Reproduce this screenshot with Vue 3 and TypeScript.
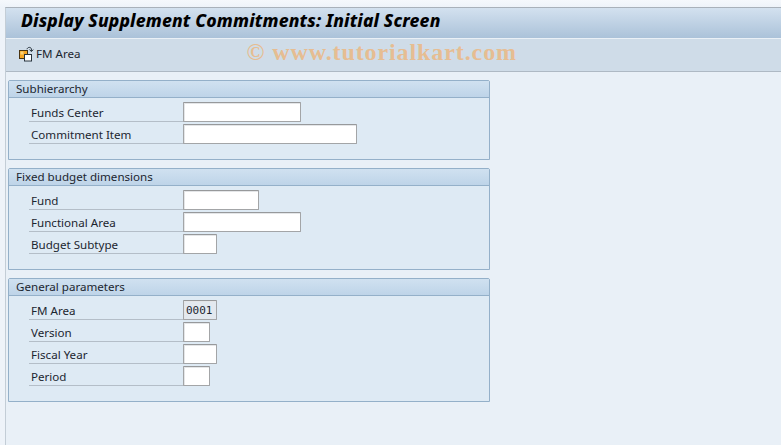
<script setup lang="ts">
interface Field {
  label: string
  width: number
  value?: string
  readonly?: boolean
}

interface Group {
  title: string
  height: number
  fields: Field[]
}

const groups: Group[] = [
  {
    title: 'Subhierarchy',
    height: 80,
    fields: [
      { label: 'Funds Center', width: 118 },
      { label: 'Commitment Item', width: 174 },
    ],
  },
  {
    title: 'Fixed budget dimensions',
    height: 102,
    fields: [
      { label: 'Fund', width: 76 },
      { label: 'Functional Area', width: 118 },
      { label: 'Budget Subtype', width: 34 },
    ],
  },
  {
    title: 'General parameters',
    height: 124,
    fields: [
      { label: 'FM Area', width: 34, value: '0001', readonly: true },
      { label: 'Version', width: 27 },
      { label: 'Fiscal Year', width: 34 },
      { label: 'Period', width: 27 },
    ],
  },
]
</script>

<template>
  <div class="screen">
    <div class="frame">
      <div class="title-bar">
        <h1>Display Supplement Commitments: Initial Screen</h1>
      </div>
      <div class="toolbar">
        <button class="tool-btn" type="button">
          <svg width="16" height="16" viewBox="0 0 16 16">
            <rect x="1.5" y="4.5" width="8" height="8" fill="#f5a623" stroke="#4a3410" />
            <rect x="2.5" y="5.5" width="3" height="3" fill="#fbd27a" />
            <rect x="6.5" y="8.5" width="7" height="6.5" fill="#fff" stroke="#26323c" />
            <path d="M9 3.2 C9.6 0.9 12.6 0.8 13.4 2.8 L13.4 5" fill="none" stroke="#26323c" />
            <path d="M11.6 3.6 L13.4 5.6 L15.2 3.6" fill="none" stroke="#26323c" />
          </svg>
          <span>FM Area</span>
        </button>
        <span class="watermark">© www.tutorialkart.com</span>
      </div>
      <div class="content">
        <section v-for="group in groups" :key="group.title" class="group" :style="{ height: group.height + 'px' }">
          <h2>{{ group.title }}</h2>
          <div class="rows">
            <div v-for="field in group.fields" :key="field.label" class="row">
              <label>{{ field.label }}</label>
              <input
                type="text"
                :class="{ readonly: field.readonly }"
                :style="{ width: field.width + 'px' }"
                :value="field.value ?? ''"
                :readonly="field.readonly"
              />
            </div>
          </div>
        </section>
      </div>
    </div>
  </div>
</template>

<style>
html,
body {
  margin: 0;
  background: #e9f0f7;
  overflow: hidden;
}
</style>

<style scoped>
.screen {
  width: 781px;
  height: 445px;
  box-sizing: border-box;
  padding-top: 7px;
  background: linear-gradient(#f5f8fc, #eef3f9 7px);
  font-family: "Noto Sans", "Liberation Sans", sans-serif;
  color: #1c2630;
}

.frame {
  height: 438px;
  margin-left: 5px;
  border-left: 1px solid #c3cdd6;
  border-top: 1px solid #a9b1ba;
  box-sizing: border-box;
  background: #e9f0f7;
}

.title-bar {
  height: 30px;
  display: flex;
  align-items: center;
  padding-left: 15px;
  background: linear-gradient(#d3e1ef, #abc2d9);
  border-bottom: 1px solid #eaf0f6;
}

h1 {
  margin: -6px 0 0;
  font-size: 17.5px;
  font-weight: 800;
  font-style: italic;
  letter-spacing: 0.15px;
  white-space: nowrap;
  color: #000;
}

.toolbar {
  height: 33px;
  box-sizing: border-box;
  padding-bottom: 3px;
  display: flex;
  align-items: center;
  background: #cfdce8;
  border-bottom: 1px solid #aeb9c4;
}

.tool-btn {
  display: flex;
  align-items: center;
  gap: 2px;
  margin-left: 12px;
  padding: 0;
  border: 0;
  background: none;
  font: inherit;
  font-size: 11.6px;
  color: inherit;
}

.watermark {
  margin-left: 166px;
  margin-top: -3px;
  font-family: "Liberation Serif", serif;
  font-size: 24px;
  font-weight: 700;
  letter-spacing: 0.9px;
  white-space: nowrap;
  color: #e6bd92;
}

.content {
  display: flex;
  flex-direction: column;
  gap: 8px;
  padding: 8px 0 0 2px;
}

.group {
  width: 482px;
  box-sizing: border-box;
  border: 1px solid #94b0c9;
  border-radius: 2px 2px 0 0;
  background: #deeaf4;
}

h2 {
  margin: 0;
  height: 16px;
  line-height: 15px;
  padding-left: 7px;
  font-size: 11.6px;
  font-weight: 400;
  background: linear-gradient(#d0e1f0, #bed4e8);
  border-bottom: 1px solid #94b0c9;
}

.rows {
  padding-top: 4px;
}

.row {
  display: flex;
  align-items: flex-start;
  height: 22px;
  padding-left: 20px;
}

label {
  width: 154px;
  height: 20px;
  line-height: 21px;
  padding-left: 2px;
  box-sizing: border-box;
  font-size: 11.6px;
  border-bottom: 1px solid #b4bec8;
}

input {
  height: 20px;
  margin: 0;
  padding: 0 2px;
  box-sizing: border-box;
  border: 1px solid #a3a5a7;
  border-top-color: #97999b;
  border-radius: 1px;
  background: #fff;
  box-shadow: inset 1px 1px 0 #e4e6e8;
  font-family: "DejaVu Sans Mono", monospace;
  font-size: 11px;
  color: #1c2630;
  outline: none;
}

input.readonly {
  background: #e3e9ef;
}
</style>
